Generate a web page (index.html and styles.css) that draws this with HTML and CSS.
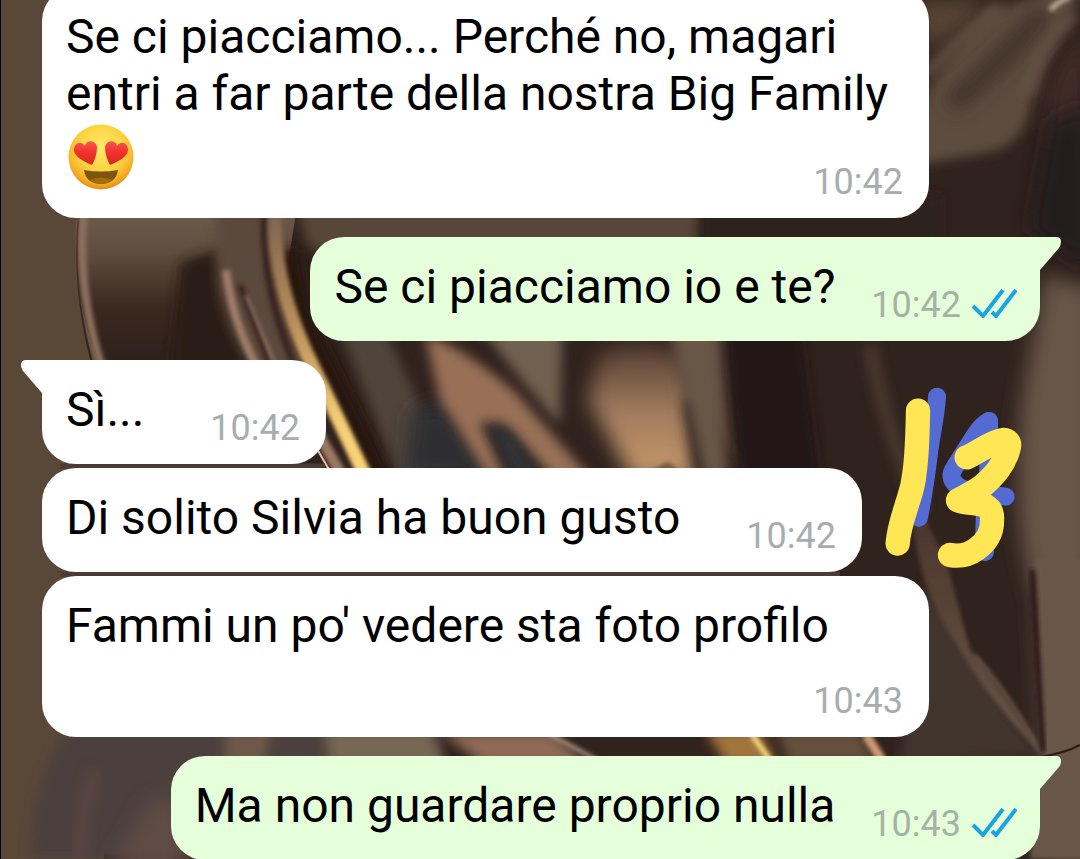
FILE: index.html
```
<!DOCTYPE html>
<html lang="it">
<head>
  <meta charset="UTF-8" />
  <meta name="viewport" content="width=device-width, initial-scale=1.0" />
  <title>Chat</title>
  <link rel="stylesheet" href="styles.css">
</head>
<body>

<!-- Wallpaper -->
<svg class="wallpaper" viewBox="0 0 1080 859" preserveAspectRatio="xMidYMid slice" aria-hidden="true">
  <defs>
    <filter id="soft" x="-30%" y="-30%" width="160%" height="160%"><feGaussianBlur stdDeviation="10" /></filter>
    <filter id="mid" x="-30%" y="-30%" width="160%" height="160%"><feGaussianBlur stdDeviation="6" /></filter>
    <filter id="fine" x="-30%" y="-30%" width="160%" height="160%"><feGaussianBlur stdDeviation="2" /></filter>
    <linearGradient id="fold" x1="0" y1="0" x2="0" y2="1">
      <stop offset="0" stop-color="#75634f" />
      <stop offset="0.35" stop-color="#5f4d3f" />
      <stop offset="0.65" stop-color="#3b281f" />
      <stop offset="1" stop-color="#2b201c" />
    </linearGradient>
    <linearGradient id="gold" x1="0" y1="0" x2="0" y2="1">
      <stop offset="0" stop-color="#79614f" />
      <stop offset="0.4" stop-color="#b78c5a" />
      <stop offset="0.75" stop-color="#f3cc78" />
      <stop offset="1" stop-color="#ffd873" />
    </linearGradient>
    <linearGradient id="glow" x1="0" y1="0" x2="0" y2="1">
      <stop offset="0" stop-color="#523c31" />
      <stop offset="0.5" stop-color="#a27c5e" />
      <stop offset="1" stop-color="#c99a6c" />
    </linearGradient>
    <linearGradient id="ridge" x1="0" y1="0" x2="0" y2="1">
      <stop offset="0" stop-color="#443029" />
      <stop offset="0.5" stop-color="#594438" />
      <stop offset="1" stop-color="#6b564a" />
    </linearGradient>
  </defs>
  <rect width="1080" height="859" fill="#30221d" />
  <path d="M0 0 H90 V250 Q85 300 104 370 V859 H0Z" fill="#594838" />

  <!-- left fold -->
  <path d="M80 190 Q66 290 102 370 L270 370 L300 190Z" fill="url(#fold)" />
  <path d="M180 262 L218 250 L222 300 L260 370 L170 370Z" fill="#2b1c18" filter="url(#mid)" />
  <path d="M80 205 Q70 285 94 370" fill="none" stroke="#2f2118" stroke-width="2" />
  <path d="M84 205 Q76 290 103 370" fill="none" stroke="#8c705f" stroke-width="8" filter="url(#fine)" />
  <path d="M210 190 L285 190 L275 270 L330 400 L260 380 Q210 310 220 250Z" fill="#5c4a3c" filter="url(#mid)" />
  <path d="M221 190 L221 244" stroke="#b9a487" stroke-width="10" filter="url(#mid)" />
  <path d="M226 270 Q232 320 256 365" fill="none" stroke="#a07c69" stroke-width="8" filter="url(#fine)" />
  <path d="M240 285 L270 365" stroke="#3b241d" stroke-width="6" filter="url(#fine)" />
  <path d="M246 295 L275 365" stroke="#b49785" stroke-width="2" filter="url(#fine)" />
  <path d="M265 200 Q258 280 294 365" fill="none" stroke="#3b2820" stroke-width="7" filter="url(#fine)" />
  <path d="M292 195 H700 V250 H310Z" fill="#594638" filter="url(#mid)" />
  <path d="M700 195 H940 V250 H700Z" fill="#2e211e" filter="url(#mid)" />
  <path d="M288 250 Q290 290 310 340 L390 500" fill="none" stroke="#25160f" stroke-width="26" filter="url(#mid)" />
  <path d="M276 205 Q270 270 305 350 L372 490" fill="none" stroke="url(#gold)" stroke-width="14" filter="url(#fine)" />
  <path d="M302 405 L350 490" stroke="#9b7862" stroke-width="11" filter="url(#fine)" />
  <path d="M313 442 L335 480" stroke="#dfc6ae" stroke-width="2" />

  <!-- middle folds -->
  <path d="M340 330 L385 330 L455 480 L400 480Z" fill="#51443b" filter="url(#mid)" />
  <path d="M412 410 L445 400 L500 480 L405 480Z" fill="#2d2d31" filter="url(#soft)" />
  <path d="M425 335 Q460 345 515 392 L592 480 L555 480 L503 424 L480 422 L507 480 L490 480 L440 400Z" fill="#987057" filter="url(#mid)" />
  <path d="M488 425 L512 432 L545 480 L512 480Z" fill="#303236" filter="url(#mid)" />
  <path d="M478 325 L562 325 L560 425 L520 378Z" fill="#70604f" filter="url(#mid)" />
  <path d="M600 355 Q640 335 685 355 L735 480 L633 480 L588 400Z" fill="url(#glow)" filter="url(#soft)" />
  <path d="M643 475 L668 462 L690 480Z" fill="#725641" filter="url(#fine)" />
  <path d="M680 325 L722 325 L730 480 L695 480Z" fill="#5d4b3e" filter="url(#soft)" />
  <path d="M683 400 L705 400 L750 485 L697 485Z" fill="#33221b" filter="url(#mid)" />
  <path d="M670 325 L715 325 L728 480 L705 480Z" fill="#675746" filter="url(#mid)" />
  <path d="M725 325 L800 325 L820 480 L740 480Z" fill="#211918" filter="url(#mid)" />

  <!-- right side -->
  <path d="M915 0 L990 0 L960 30 L925 50Z" fill="#594536" filter="url(#soft)" />
  <path d="M925 95 Q950 50 995 10 L1055 -10 L1080 -5 L1065 25 Q1038 60 1030 110 Q1020 148 985 153 L915 165Z" fill="#5d4d41" filter="url(#mid)" />
  <path d="M925 75 Q960 38 1000 5" fill="none" stroke="#67564a" stroke-width="10" filter="url(#mid)" />
  <path d="M950 105 Q1000 65 1045 10" fill="none" stroke="#3c2e27" stroke-width="20" filter="url(#soft)" />
  <path d="M1075 15 Q1040 50 1030 95" fill="none" stroke="#6c594d" stroke-width="9" filter="url(#mid)" />
  <path d="M1090 30 L1056 65 Q1045 100 1042 135 L1090 150Z" fill="#402a25" filter="url(#soft)" />
  <path d="M1090 105 L1050 120 L1030 230 L1090 270Z" fill="#221b1b" filter="url(#soft)" />
  <path d="M1050 10 Q1060 0 1070 -3" fill="none" stroke="#b5a38f" stroke-width="6" filter="url(#fine)" />
  <path d="M1045 275 L1095 290 L1095 859 L1048 859 L1036 600 Q1010 530 1022 400Z" fill="#68564a" filter="url(#soft)" />
  <path d="M1036 560 L1095 560 L1095 859 L1030 859 L1042 755Z" fill="#6a574a" filter="url(#fine)" />
  <path d="M870 345 Q885 430 922 510" fill="none" stroke="#49372e" stroke-width="14" filter="url(#mid)" />
  <path d="M925 580 L935 600 Q970 660 1038 755 L900 765Z" fill="#42362f" filter="url(#mid)" />
  <path d="M905 475 Q930 530 946 560 L970 650 Q1005 695 1040 753 Q985 695 960 650 Q925 600 915 540Z" fill="url(#ridge)" filter="url(#fine)" />
  <path d="M975 655 Q1012 698 1041 753" fill="none" stroke="#776052" stroke-width="3" filter="url(#fine)" />
  <path d="M1032 570 L1043 752" stroke="#2e1f1a" stroke-width="6" filter="url(#fine)" />
  <path d="M1040 757 Q1065 753 1080 745" fill="none" stroke="#2b1c18" stroke-width="2" />

  <!-- strip under the last incoming message -->
  <path d="M70 725 L440 725 L440 859 L30 859 Q32 775 70 725Z" fill="#4c403d" filter="url(#mid)" />
  <path d="M95 770 Q80 820 78 859" fill="none" stroke="#5a453f" stroke-width="14" filter="url(#mid)" />
  <path d="M150 800 L185 800 L185 870 L110 870Z" fill="#604c44" filter="url(#soft)" />
  <path d="M225 730 L270 730 L265 765 L225 765Z" fill="#705849" filter="url(#mid)" />
  <path d="M325 730 L430 730 L445 765 L330 765Z" fill="#776753" filter="url(#mid)" />
  <path d="M440 732 L550 732 L590 765 L485 765Z" fill="#8f6b57" filter="url(#mid)" />
  <path d="M550 735 L598 760" stroke="#c0a598" stroke-width="3" filter="url(#fine)" />
  <path d="M705 730 L760 730 L777 765 L727 765Z" fill="#a2753e" filter="url(#mid)" />
  <path d="M752 735 L770 760" stroke="#ffe080" stroke-width="5" filter="url(#fine)" />
  <path d="M775 730 L860 730 L875 765 L790 765Z" fill="#65503e" filter="url(#mid)" />
  <path d="M866 735 L882 760" stroke="#d19a76" stroke-width="9" filter="url(#fine)" />
  <path d="M60 466 L325 466" stroke="#4d3c33" stroke-width="5" />
  <path d="M162 466 L182 466" stroke="#c8ad78" stroke-width="5" filter="url(#fine)" />
  <path d="M60 574 L840 574" stroke="#4d3c33" stroke-width="5" />
  <path d="M236 574 L256 574" stroke="#c8ad78" stroke-width="5" filter="url(#fine)" />
  <rect width="1" height="859" fill="#000" />
</svg>

<!-- Messages -->
<main class="chat">
  <div class="message in">
    <p class="text">Se ci piacciamo... Perché no, magari entri a far parte della nostra Big Family</p>
    <svg class="emoji" viewBox="0 0 66 66" role="img" aria-label="😍">
      <defs>
        <radialGradient id="face" cx="0.5" cy="0.36" r="0.66">
          <stop offset="0" stop-color="#ffec6b" />
          <stop offset="0.55" stop-color="#fdd23f" />
          <stop offset="0.82" stop-color="#f6ad22" />
          <stop offset="1" stop-color="#dc8519" />
        </radialGradient>
        <linearGradient id="heart" x1="0" y1="0" x2="0" y2="1">
          <stop offset="0" stop-color="#f45a50" />
          <stop offset="0.4" stop-color="#f4342f" />
          <stop offset="1" stop-color="#d92624" />
        </linearGradient>
      </defs>
      <circle cx="33" cy="33" r="32.5" fill="url(#face)" />
      <path d="M24 41 C14 37 6 32 6 26 C6 19 13 16 17 22 C18 15 28 16 29 23 C29 29 27 36 24 41Z" fill="url(#heart)" />
      <path d="M42 41 C52 37 60 32 60 26 C60 19 53 16 49 22 C48 15 38 16 37 23 C37 29 39 36 42 41Z" fill="url(#heart)" />
      <path d="M16 46 Q33 49 50 46 C49 55 42 60 33 60 C24 60 17 55 16 46Z" fill="#7d5410" />
      <path d="M22 56 Q33 51 44 56 Q40 60 33 60 Q26 60 22 56Z" fill="#a0700f" />
    </svg>
    <span class="time">10:42</span>
  </div>

  <div class="message out tail first">
    <p class="text">Se ci piacciamo io e te?</p>
    <span class="time">10:42</span>
    <svg class="ticks" viewBox="0 0 46 30" role="img" aria-label="Letto"><path d="M2 18 L12 28 L32 2 M21 24 L25 28 L45 2" /></svg>
    <svg class="corner" viewBox="0 0 22 34" aria-hidden="true"><path d="M0 0 H16 Q21 0 21 5 Q21 8 19 11 L0 33Z" /></svg>
  </div>

  <div class="message in tail first">
    <p class="text">Sì...</p>
    <span class="time">10:42</span>
    <svg class="corner" viewBox="0 0 22 34" aria-hidden="true"><path d="M0 0 H16 Q21 0 21 5 Q21 8 19 11 L0 33Z" /></svg>
  </div>

  <div class="message in">
    <p class="text">Di solito Silvia ha buon gusto</p>
    <span class="time">10:42</span>
  </div>

  <div class="message in">
    <p class="text">Fammi un po' vedere sta foto profilo</p>
    <span class="time">10:43</span>
  </div>

  <div class="message out tail first">
    <p class="text">Ma non guardare proprio nulla</p>
    <span class="time">10:43</span>
    <svg class="ticks" viewBox="0 0 46 30" role="img" aria-label="Letto"><path d="M2 18 L12 28 L32 2 M21 24 L25 28 L45 2" /></svg>
    <svg class="corner" viewBox="0 0 22 34" aria-hidden="true"><path d="M0 0 H16 Q21 0 21 5 Q21 8 19 11 L0 33Z" /></svg>
  </div>
</main>

<!-- Hand-drawn number over the chat -->
<svg class="doodle" viewBox="0 0 600 660" role="img" aria-label="13">
  <g class="blue">
    <path d="M231 80 C228 140 212 200 205 265 C198 325 190 375 177 443" />
    <path d="M387 153 Q365 165 345 195 L285 290 Q262 322 290 345 Q310 365 437 380" />
    <path d="M387 153 Q388 300 378 400 Q370 470 375 546" />
  </g>
  <g class="yellow">
    <path d="M174 122 C173 180 172 245 164 305 C158 365 145 385 139 410 C126 450 116 480 113 521" />
    <path d="M320 262 C355 248 390 216 430 210 Q450 211 447 229 C435 285 400 320 365 350 C335 372 310 381 294 391 C320 401 355 397 377 408 Q398 420 396 450 C397 490 380 515 350 537 Q315 563 270 555" />
  </g>
</svg>

</body>
</html>
```
FILE: styles.css
```
* { margin: 0; padding: 0; box-sizing: border-box; }
html, body {
  height: 100%;
  font-family: Roboto, 'Liberation Sans', sans-serif;
  color: #000;
  overflow: hidden;
  background: #30221d;
}

.wallpaper {
  position: absolute;
  top: 0;
  left: 0;
  width: 100%;
  height: 100%;
}

/* scrolled a little past the top of the first bubble */
.chat {
  position: relative;
  display: flex;
  flex-direction: column;
  gap: 4px;
  margin-top: -13px;
  padding: 0 40px 0 42px;
}

.message {
  position: relative;
  display: flex;
  flex-wrap: wrap;
  flex-shrink: 0;
  align-items: flex-end;
  max-width: calc(100% - 111px);
  padding: 21px 26px 15px 24px;
  border-radius: 34px;
}

.in {
  align-self: flex-start;
  background: #fff;
}

.out {
  align-self: flex-end;
  background: #e5ffdb;
}

.first {
  margin-top: 15px;
}

.text {
  align-self: flex-start;
  font-size: 48px;
  line-height: 57px;
}

.time {
  margin-top: 26px;
  margin-left: auto;
  font-size: 36px;
  line-height: 42px;
  color: #a7adaf;
}

.in .time {
  padding-left: 66px;
}

.out .time {
  padding-left: 36px;
  color: #a5b2a5;
}

.emoji {
  width: 66px;
  height: 66px;
  margin: 2px 0 13px 2px;
}

.out {
  padding-right: 23px;
}

.ticks {
  width: 46px;
  height: 30px;
  margin: 0 0 8px 10px;
  fill: none;
  stroke: #1ba5e0;
  stroke-width: 4;
}

/* bubble tails */
.out.tail { border-top-right-radius: 0; }
.in.tail { border-top-left-radius: 0; }

.corner {
  position: absolute;
  top: 0;
  left: 100%;
  width: 22px;
  height: 34px;
  fill: #e5ffdb;
}

.in .corner {
  left: auto;
  right: 100%;
  fill: #fff;
  transform: scaleX(-1);
}

.doodle {
  position: absolute;
  top: 370px;
  right: 20px;
  width: 200px;
  height: 220px;
  fill: none;
  stroke-linecap: round;
  stroke-linejoin: round;
}

.blue { stroke: #536bd3; stroke-width: 54; }
.yellow { stroke: #ffe655; stroke-width: 73; }
```
